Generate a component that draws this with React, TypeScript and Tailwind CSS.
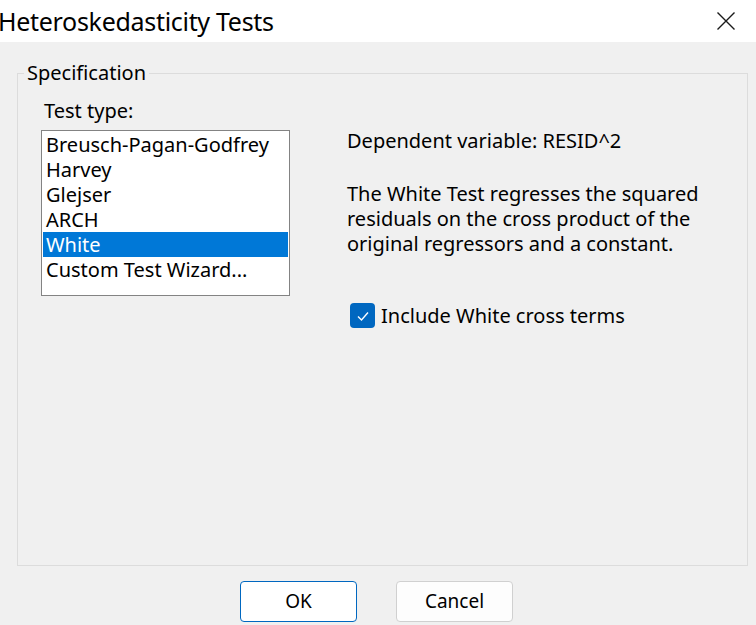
import React, { useState } from 'react';

const font = { fontFamily: '"Noto Sans", "Open Sans", sans-serif' };

const tests = ['Breusch-Pagan-Godfrey', 'Harvey', 'Glejser', 'ARCH', 'White', 'Custom Test Wizard...'];

export default function App() {
  const [selected, setSelected] = useState('White');
  const [cross, setCross] = useState(true);

  return (
    <div className="w-[756px] h-[625px] bg-[#f0f0f0] text-black overflow-hidden" style={font}>
      {/* Title bar */}
      <div className="h-[42px] bg-white flex items-center justify-between">
        <span className="text-[25px] leading-none -ml-[2px] tracking-[-0.3px] whitespace-nowrap">Heteroskedasticity Tests</span>
        <button className="w-[46px] h-[42px] flex items-center justify-center mr-[7px]">
          <svg width="20" height="20" viewBox="0 0 20 20" fill="none" stroke="#1a1a1a" strokeWidth="1.4">
            <path d="M1.5 1.5 L18.5 18.5 M18.5 1.5 L1.5 18.5" />
          </svg>
        </button>
      </div>

      {/* Group box */}
      <div className="relative ml-[17px] mt-[31px] w-[731px] h-[493px] border border-[#dcdcdc]">
        <span className="absolute -top-[14px] left-[6px] px-[3px] bg-[#f0f0f0] text-[20px] leading-[25px]">
          Specification
        </span>
        <div className="flex pt-[24px]">
          <div className="ml-[23px] w-[249px]">
            <div className="text-[20px] leading-[25px] ml-[3px]">Test type:</div>
            <div className="mt-[7px] h-[166px] bg-white border border-[#838383] p-[1px]">
              {tests.map((t) => (
                <div
                  key={t}
                  onClick={() => setSelected(t)}
                  className={`h-[25px] leading-[26px] px-[3px] text-[20px] whitespace-nowrap cursor-default ${
                    selected === t ? 'bg-[#0078d7] text-white' : ''
                  }`}
                >
                  {t}
                </div>
              ))}
            </div>
          </div>
          <div className="ml-[57px] pt-[30px] text-[20px] leading-[25px]">
            <div>Dependent variable: RESID^2</div>
            <div className="mt-[28px] w-[380px]">
              The White Test regresses the squared residuals on the cross product of the original regressors and a constant.
            </div>
            <label className="mt-[47px] flex items-center gap-[6px] ml-[3px] cursor-default">
              <span
                onClick={() => setCross(!cross)}
                className={`w-[25px] h-[25px] rounded-[4px] flex items-center justify-center ${
                  cross ? 'bg-[#0067c0]' : 'bg-white border border-[#555]'
                }`}
              >
                {cross && (
                  <svg width="14" height="14" viewBox="0 0 14 14" fill="none" stroke="white" strokeWidth="1.4">
                    <path d="M2 7.5 L5.5 11 L12 3.5" />
                  </svg>
                )}
              </span>
              <span>Include White cross terms</span>
            </label>
          </div>
        </div>
      </div>

      {/* Buttons */}
      <div className="flex gap-[39px] ml-[240px] mt-[15px]">
        <button className="w-[117px] h-[41px] bg-white border border-[#0067c0] rounded-[4px] text-[19px]">OK</button>
        <button className="w-[117px] h-[41px] bg-[#fdfdfd] border border-[#d0d0d0] rounded-[4px] text-[19px]">
          Cancel
        </button>
      </div>
    </div>
  );
}
